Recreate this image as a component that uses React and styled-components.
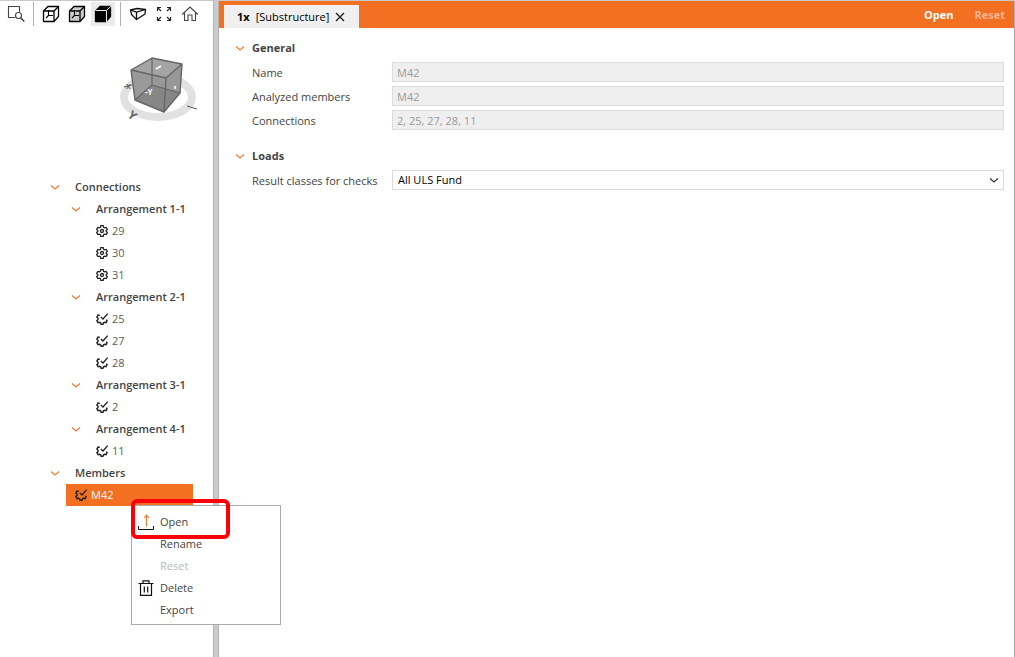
import React, { useState } from 'react';
import styled, { createGlobalStyle } from 'styled-components';

const GlobalStyle = createGlobalStyle`
  * {
    box-sizing: border-box;
  }

  body {
    margin: 0;
    background: #fff;
  }

  body, button, input, select {
    font-family: "Open Sans", "Noto Sans", sans-serif;
    font-size: 11px;
    line-height: 16px;
    color: #444;
  }

  button {
    padding: 0;
    border: none;
    background: none;
    white-space: nowrap;
    cursor: pointer;
  }

  svg {
    display: block;
    flex: none;
  }
`;

const Page = styled.div`
  display: flex;
  min-height: 100vh;
  border-top: 1px solid #c8c8c8;
`;

const Sidebar = styled.aside`
  flex: 0 0 213px;
`;

const Splitter = styled.div`
  flex: none;
  width: 6px;
  background: #cbcbcb;
  border-left: 1px solid #b4b4b4;
  border-right: 1px solid #b4b4b4;
`;

const Main = styled.main`
  flex: 1;
  min-width: 0;
  border-right: 1px solid #ababab;
`;

const Toolbar = styled.div`
  display: flex;
  align-items: center;
  height: 26px;
  padding-left: 4px;
`;

const ToolButton = styled.button`
  display: flex;
  align-items: center;
  justify-content: center;
  width: 24px;
  height: 24px;
  margin-right: 2px;
  background: ${(props) => (props.$active ? '#ebebeb' : 'transparent')};
`;

const ToolDivider = styled.div`
  width: 1px;
  height: 24px;
  margin: 0 5px 0 3px;
  background: #b0b0b0;
`;

const ViewCube = styled.div`
  display: flex;
  justify-content: flex-end;
  height: 149px;
  padding: 23px 13px 0 0;
`;

const Tree = styled.ul`
  list-style: none;
  margin: 0;
  padding: 0 20px 0 45px;
`;

const Branch = styled.ul`
  list-style: none;
  margin: 0;
  padding: 0 0 0 21px;
`;

const TreeItem = styled.li`
  position: relative;
`;

const NodeButton = styled.button`
  display: flex;
  align-items: center;
  width: 100%;
  height: 22px;
  padding-left: 5px;
  gap: 15px;
  font-weight: 600;
`;

const LeafButton = styled.button`
  display: flex;
  align-items: center;
  width: 100%;
  height: 22px;
  padding-left: 9px;
  gap: 4px;
  color: ${(props) => (props.$selected ? '#fff' : '#5c5c5c')};
  background: ${(props) => (props.$selected ? '#f36f21' : 'transparent')};

  svg {
    color: #222;
  }
`;

const Menu = styled.div`
  position: absolute;
  z-index: 2;
  top: 21px;
  left: 65px;
  width: 150px;
  padding: 5px 0 3px;
  border: 1px solid #ababab;
  background: #fff;
`;

const MenuItem = styled.button`
  display: grid;
  grid-template-columns: 16px 1fr;
  align-items: center;
  gap: 6px;
  width: 100%;
  height: 22px;
  padding-left: 6px;
  text-align: left;
  color: #444;

  &:disabled {
    color: #b9b9b9;
  }
`;

const MenuLabel = styled.span`
  grid-column: 2;
`;

const Highlight = styled.div`
  position: absolute;
  top: -7px;
  left: -1px;
  width: 99px;
  height: 40px;
  border: 4px solid #fb0007;
  border-radius: 6px;
  pointer-events: none;
`;

const Header = styled.header`
  display: flex;
  align-items: flex-end;
  justify-content: space-between;
  height: 27px;
  padding-left: 5px;
  background: #f36f21;
`;

const Tab = styled.div`
  display: flex;
  align-items: center;
  height: 23px;
  padding: 0 14px 0 13px;
  gap: 6px;
  color: #000;
  background: #f0f0f0;
`;

const CloseButton = styled.button`
  display: flex;
  color: #222;
`;

const HeaderActions = styled.div`
  display: flex;
  align-self: center;
  gap: 21px;
  padding-right: 9px;
`;

const HeaderButton = styled.button`
  font-weight: 700;
  color: #fff;

  &:disabled {
    color: #f9b58f;
  }
`;

const Form = styled.form`
  padding: 8px 10px 0 16px;
`;

const Section = styled.section`
  margin-bottom: 12px;
`;

const SectionTitle = styled.h2`
  display: flex;
  align-items: center;
  height: 24px;
  margin: 0;
  gap: 7px;
  font-size: 11px;
  font-weight: 700;
`;

const Row = styled.div`
  display: grid;
  grid-template-columns: 140px 1fr;
  align-items: center;
  height: 24px;
  padding-left: 17px;
`;

const Label = styled.label`
  padding-top: 2px;
`;

const Input = styled.input`
  width: 100%;
  height: 20px;
  padding: 0 4px;
  border: 1px solid #dcdcdc;
  color: #9a9a9a;
  background: #efefef;
`;

const SelectWrap = styled.div`
  display: grid;
  align-items: center;

  > * {
    grid-area: 1 / 1;
  }

  svg {
    justify-self: end;
    margin-right: 5px;
    pointer-events: none;
  }
`;

const Select = styled.select`
  appearance: none;
  width: 100%;
  height: 20px;
  padding: 0 20px 0 5px;
  border: 1px solid #dcdcdc;
  border-radius: 0;
  color: #000;
  background: #fff;
`;

const Chevron = ({ color = '#ee7b35' }) => (
  <svg width="10" height="10" viewBox="0 0 10 10" fill="none" stroke={color} strokeWidth="1.2">
    <path d="M1 3.5 L5 7 L9 3.5" />
  </svg>
);

const GearIcon = () => (
  <svg width="12" height="12" viewBox="0 0 12 12" fill="none" stroke="currentColor" strokeWidth="1.3">
    <path d="M4.8 0.7h2.4l.4 1.6 1 .6 1.6-.5 1.2 2-1.2 1.1v1l1.2 1.1-1.2 2-1.6-.5-1 .6-.4 1.6H4.8l-.4-1.6-1-.6-1.6.5-1.2-2 1.2-1.1v-1L.6 4.400l1.2-2 1.600.5 1-.6z" />
    <circle cx="6" cy="6" r="1.5" />
  </svg>
);

const GearCheckIcon = () => (
  <svg width="12" height="12" viewBox="0 0 12 12" fill="none" stroke="currentColor" strokeWidth="1.4">
    <path d="M3.8 2.5 L1.9 2.1 L0.9 4.1 L2 5.2 V6.6 L0.9 7.6 L2 9.6 L3.6 9.2 L4.6 9.8 L5.1 11.3 H7 L7.5 9.8 L8.5 9.2 L10.1 9.6 L11.1 7.7 L10.2 6.8" />
    <path d="M4.8 4 L7 6 L11.7 0.6" />
  </svg>
);

const CubeIcon = ({ fill = 'none', solid }) => (
  <svg width="18" height="18" viewBox="0 0 18 18" fill={fill} stroke="#000" strokeWidth="1.3" strokeLinejoin="round">
    <path d="M1.5 6 L6 1.500 H16.5 V11.5 L12 16.5 H1.5 Z" />
    {solid ? (
      <path d="M1.5 5.5 H12.5 L17 1.2 M12.5 5.5 V17" stroke="#ebebeb" strokeWidth="1" />
    ) : (
      <>
        <path d="M1.5 6 H12 V16.5 M12 6 L16.5 1.5" />
        <path d="M6.5 5 V10.5 H11 M6.5 10.5 L4 13" strokeWidth="1.1" />
      </>
    )}
  </svg>
);

const ZoomAreaIcon = () => (
  <svg width="18" height="18" viewBox="0 0 18 18" fill="none" stroke="#444" strokeWidth="1.1">
    <path d="M8 12.5 H1.5 V1.5 H12.5 V7" />
    <circle cx="11.5" cy="10.5" r="3" />
    <path d="M13.7 12.7 L17.3 16.5" strokeWidth="1.5" />
  </svg>
);

const SectionViewIcon = () => (
  <svg width="18" height="16" viewBox="0 0 18 16" fill="none" stroke="#111" strokeWidth="1.3" strokeLinejoin="round">
    <path d="M1.5 4 L8 2.500 L16.5 3.5 L16 8 L7.5 13.5 L2.500 8.5 Z" />
    <path d="M1.5 4 L7.5 6.2 L16.5 3.5 M7.5 6.2 V13.5" />
  </svg>
);

const FitIcon = () => (
  <svg width="16" height="16" viewBox="0 0 16 16" fill="none" stroke="#222" strokeWidth="1.2">
    <path d="M1.5 5 V1.5 H5 M11 1.5 H14.5 V5 M14.5 11 V14.5 H11 M5 14.5 H1.5 V11" />
    <path d="M1.5 1.5 L5 5 M14.5 1.5 L11 5 M14.5 14.5 L11 11 M1.5 14.5 L5 11" />
  </svg>
);

const HomeIcon = () => (
  <svg width="18" height="18" viewBox="0 0 18 18" fill="none" stroke="#444" strokeWidth="1.1">
    <path d="M1.2 9.5 L9 2 L16.8 9.5 M3.5 8 V15.5 H7 V10 H11 V15.5 H14.5 V8" />
  </svg>
);

const OpenIcon = () => (
  <svg width="16" height="16" viewBox="0 0 16 16" fill="none">
    <path d="M8.5 12.5 V1 M6 4 L8.5 1.2 L11 4" stroke="#ee7b35" strokeWidth="1.1" />
    <path d="M0.5 12 V15.5 H15.5 V12" stroke="#111" />
  </svg>
);

const TrashIcon = () => (
  <svg width="16" height="16" viewBox="0 0 16 16" fill="none" stroke="#111" strokeWidth="1.2">
    <path d="M0.5 3.5 H15.5 M5 3.5 V0.8 H11 V3.5 M2.5 3.5 V15.4 H13.5 V3.5 M6.300 6.5 V12.5 M9.7 6.5 V12.5" />
  </svg>
);

const NavigationCube = () => (
  <svg width="82" height="76" viewBox="0 0 82 76" fill="none">
    <ellipse cx="40" cy="47" rx="34" ry="20" stroke="#e1e1e1" strokeWidth="8" />
    <path d="M13 20 L34 8 L64 14 L62 43 L46 62 L17 50 Z" fill="#999" />
    <path d="M13 20 L34 8 L64 14 L48 28 Z" fill="#a4a4a4" />
    <path d="M48 28 L64 14 L62 43 L46 62 Z" fill="#989898" />
    <path d="M34 35 L62 43 L46 62 L17 50 Z" fill="#868686" />
    <path d="M34 8 V35 L17 50 M34 35 L62 43" stroke="#666" strokeWidth="1.2" />
    <path
      d="M13 20 L34 8 L64 14 L48 28 Z M13 20 L17 50 L46 62 L62 43 L64 14 M48 28 L46 62"
      stroke="#666"
      strokeWidth="1.4"
      strokeLinejoin="round"
    />
    <path d="M38 19 L43 16 M57 36 V39" stroke="#fff" strokeWidth="1.5" />
    <path d="M6 37 L14 35 M69 56 L79 59" stroke="#555" />
    <text x="27" y="45" fontSize="8" fontWeight="700" fill="#fff">-Y</text>
    <text x="8" y="39" fontSize="7" fontWeight="700" fill="#666">X</text>
    <text x="11" y="70" fontSize="12" fontWeight="700" fill="#666" transform="rotate(40 15 65)">Y</text>
  </svg>
);

const arrangements = [
  { name: 'Arrangement 1-1', items: ['29', '30', '31'], checked: false },
  { name: 'Arrangement 2-1', items: ['25', '27', '28'], checked: true },
  { name: 'Arrangement 3-1', items: ['2'], checked: true },
  { name: 'Arrangement 4-1', items: ['11'], checked: true },
];

const TreeNode = ({ label, children }) => {
  const [open, setOpen] = useState(true);

  return (
    <TreeItem>
      <NodeButton type="button" aria-expanded={open} onClick={() => setOpen(!open)}>
        <Chevron />
        {label}
      </NodeButton>
      {open && <Branch>{children}</Branch>}
    </TreeItem>
  );
};

const ContextMenu = () => (
  <Menu role="menu">
    <MenuItem type="button" role="menuitem">
      <OpenIcon />
      <MenuLabel>Open</MenuLabel>
    </MenuItem>
    <MenuItem type="button" role="menuitem">
      <MenuLabel>Rename</MenuLabel>
    </MenuItem>
    <MenuItem type="button" role="menuitem" disabled>
      <MenuLabel>Reset</MenuLabel>
    </MenuItem>
    <MenuItem type="button" role="menuitem">
      <TrashIcon />
      <MenuLabel>Delete</MenuLabel>
    </MenuItem>
    <MenuItem type="button" role="menuitem">
      <MenuLabel>Export</MenuLabel>
    </MenuItem>
    <Highlight />
  </Menu>
);

const App = () => {
  const [resultClass, setResultClass] = useState('All ULS Fund');

  return (
    <Page>
      <GlobalStyle />
      <Sidebar>
        <Toolbar>
          <ToolButton type="button" aria-label="Zoom area"><ZoomAreaIcon /></ToolButton>
          <ToolDivider />
          <ToolButton type="button" aria-label="Wireframe"><CubeIcon /></ToolButton>
          <ToolButton type="button" aria-label="Transparent"><CubeIcon fill="#ccc" /></ToolButton>
          <ToolButton type="button" aria-label="Solid" $active><CubeIcon fill="#000" solid /></ToolButton>
          <ToolDivider />
          <ToolButton type="button" aria-label="Section view"><SectionViewIcon /></ToolButton>
          <ToolButton type="button" aria-label="Zoom to fit"><FitIcon /></ToolButton>
          <ToolButton type="button" aria-label="Home view"><HomeIcon /></ToolButton>
        </Toolbar>
        <ViewCube>
          <NavigationCube />
        </ViewCube>
        <Tree>
          <TreeNode label="Connections">
            {arrangements.map((group) => (
              <TreeNode key={group.name} label={group.name}>
                {group.items.map((item) => (
                  <TreeItem key={item}>
                    <LeafButton type="button">
                      {group.checked ? <GearCheckIcon /> : <GearIcon />}
                      {item}
                    </LeafButton>
                  </TreeItem>
                ))}
              </TreeNode>
            ))}
          </TreeNode>
          <TreeNode label="Members">
            <TreeItem>
              <LeafButton type="button" $selected>
                <GearCheckIcon />
                M42
              </LeafButton>
              <ContextMenu />
            </TreeItem>
          </TreeNode>
        </Tree>
      </Sidebar>
      <Splitter />
      <Main>
        <Header>
          <Tab>
            <strong>1x</strong>
            <span>[Substructure]</span>
            <CloseButton type="button" aria-label="Close tab">
              <svg width="10" height="10" viewBox="0 0 10 10" fill="none" stroke="currentColor" strokeWidth="1.4">
                <path d="M1 1 L9 9 M9 1 L1 9" />
              </svg>
            </CloseButton>
          </Tab>
          <HeaderActions>
            <HeaderButton type="button">Open</HeaderButton>
            <HeaderButton type="button" disabled>Reset</HeaderButton>
          </HeaderActions>
        </Header>
        <Form>
          <Section>
            <SectionTitle><Chevron />General</SectionTitle>
            <Row>
              <Label htmlFor="name">Name</Label>
              <Input type="text" id="name" defaultValue="M42" disabled />
            </Row>
            <Row>
              <Label htmlFor="members">Analyzed members</Label>
              <Input type="text" id="members" defaultValue="M42" disabled />
            </Row>
            <Row>
              <Label htmlFor="connections">Connections</Label>
              <Input type="text" id="connections" defaultValue="2, 25, 27, 28, 11" disabled />
            </Row>
          </Section>
          <Section>
            <SectionTitle><Chevron />Loads</SectionTitle>
            <Row>
              <Label htmlFor="resultClass">Result classes for checks</Label>
              <SelectWrap>
                <Select id="resultClass" value={resultClass} onChange={(e) => setResultClass(e.target.value)}>
                  <option>All ULS Fund</option>
                </Select>
                <Chevron color="#333" />
              </SelectWrap>
            </Row>
          </Section>
        </Form>
      </Main>
    </Page>
  );
};

export default App;
